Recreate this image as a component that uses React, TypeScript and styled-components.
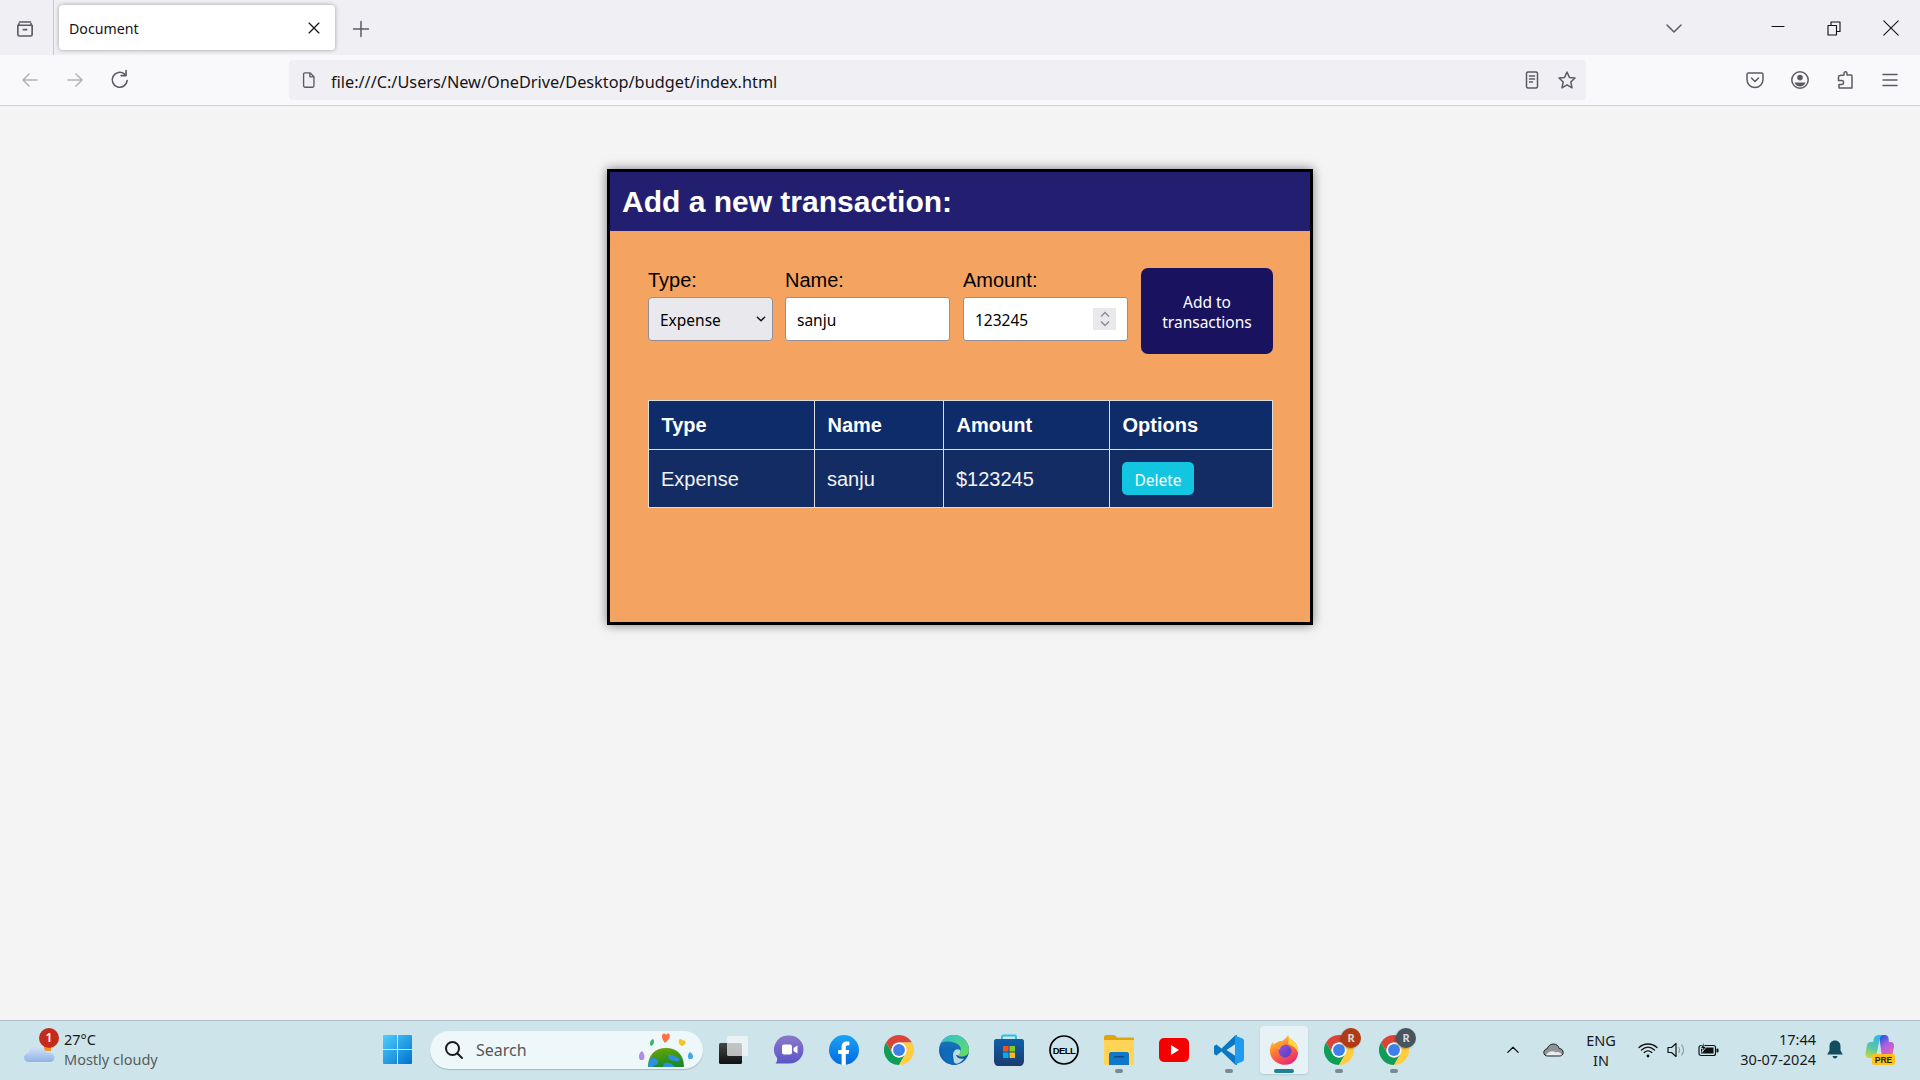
import React from "react";
import styled, { createGlobalStyle } from "styled-components";

const Global = createGlobalStyle`
  html, body { margin: 0; padding: 0; width: 1920px; height: 1080px; overflow: hidden; }
  body { font-family: "Liberation Sans", Arial, sans-serif; background: #f4f4f4; }
  * { box-sizing: border-box; }
`;

const uiFont = `"Noto Sans", "Open Sans", sans-serif`;

const Screen = styled.div`
  width: 1920px;
  height: 1080px;
  display: flex;
  flex-direction: column;
`;

/* browser chrome */
const TabBar = styled.div`
  height: 55px;
  display: flex;
  background: #f0f0f4;
`;
const ListCell = styled.div`
  width: 54px;
  padding-right: 4px;
  border-right: 1px solid #c9c9d0;
  display: flex;
  align-items: center;
  justify-content: center;
`;
const Tab = styled.div`
  width: 276px;
  height: 45px;
  margin: 5px 0 0 5px;
  padding: 0 12px 0 10px;
  display: flex;
  align-items: center;
  justify-content: space-between;
  background: #fff;
  border-radius: 4px;
  box-shadow: 0 0 4px rgba(0, 0, 0, 0.35);
`;
const TabTitle = styled.span`
  padding-top: 2px;
  font: 14.2px ${uiFont};
  color: #15141a;
`;
const PlusCell = styled.div`
  width: 52px;
  display: flex;
  align-items: center;
  justify-content: center;
  padding-top: 2px;
`;
const Spacer = styled.div`
  flex: 1;
`;
const WinCell = styled.div<{ $w: number }>`
  width: ${(p) => p.$w}px;
  display: flex;
  align-items: center;
  justify-content: center;
`;
const NavBar = styled.div`
  height: 51px;
  display: flex;
  align-items: flex-start;
  padding: 5px 8px 0 7px;
  background: #f9f9fb;
  border-bottom: 1px solid #cfcfd8;
`;
const NavCell = styled.div`
  width: 45px;
  height: 40px;
  display: flex;
  align-items: center;
  justify-content: center;
`;
const UrlBar = styled.div`
  width: 1297px;
  height: 40px;
  margin-left: 147px;
  padding: 0 2px 0 11px;
  display: flex;
  align-items: center;
  background: #f0f0f4;
  border-radius: 4px;
`;
const UrlText = styled.span`
  flex: 1;
  margin-left: 13px;
  padding-top: 3px;
  font: 16.3px ${uiFont};
  color: #15141a;
`;
const UrlAction = styled.div`
  width: 35px;
  display: flex;
  justify-content: center;
`;
const NavRight = styled.div`
  margin-left: auto;
  display: flex;
`;

/* page */
const Page = styled.main`
  flex: 1;
  display: flex;
  justify-content: center;
  align-items: flex-start;
  padding-top: 63px;
  background: #f4f4f4;
`;
const Card = styled.section`
  width: 706px;
  height: 456px;
  border: 3px solid #000;
  background: #f4a460;
  box-shadow: 0 0 10px rgba(0, 0, 0, 0.5);
`;
const CardHeader = styled.header`
  height: 59px;
  padding-left: 12px;
  display: flex;
  align-items: center;
  background: #231f70;
`;
const CardTitle = styled.h2`
  margin: 0;
  font-size: 30px;
  font-weight: 700;
  color: #fff;
`;
const CardBody = styled.div`
  padding: 37px 38px 0;
`;
const FormRow = styled.form`
  display: flex;
  align-items: flex-start;
`;
const Field = styled.div<{ $w: number; $gap: number }>`
  flex: none;
  width: ${(p) => p.$w}px;
  margin-right: ${(p) => p.$gap}px;
  display: flex;
  flex-direction: column;
  position: relative;
`;
const Label = styled.label`
  height: 29px;
  padding-top: 1px;
  font-size: 20px;
  color: #000;
`;
const ControlWrap = styled.div`
  position: relative;
`;
const Select = styled.select`
  width: 100%;
  height: 44px;
  padding: 2px 0 0 11px;
  appearance: none;
  font: 15.5px ${uiFont};
  color: #000;
  background: #e9e9ed;
  border: 1px solid #8f8f9d;
  border-radius: 4px;
`;
const Input = styled.input`
  width: 100%;
  height: 44px;
  padding: 2px 11px 0;
  font: 15.5px ${uiFont};
  color: #000;
  background: #fff;
  border: 1px solid #8f8f9d;
  border-radius: 3px;
`;
const SelectArrow = styled.span`
  position: absolute;
  right: 6px;
  top: 16px;
  display: flex;
`;
const Spin = styled.span`
  position: absolute;
  right: 12px;
  top: 11px;
  width: 23px;
  height: 22px;
  display: flex;
  align-items: center;
  justify-content: center;
  background: #e9e9ed;
`;
const AddButton = styled.button`
  flex: none;
  width: 132px;
  height: 86px;
  padding: 1px 12px 0;
  font: 15.5px/20px ${uiFont};
  color: #fff;
  background: #19125f;
  border: none;
  border-radius: 7px;
`;
const Table = styled.table`
  width: 624px;
  margin-top: 46px;
  border-collapse: collapse;
  table-layout: fixed;
`;
const Th = styled.th<{ $w: number }>`
  width: ${(p) => p.$w}px;
  padding: 12.5px 12.5px;
  font-size: 20px;
  font-weight: 700;
  text-align: left;
  color: #fff;
  background: #0e2c6a;
  border: 1px solid #ddd;
`;
const Td = styled.td`
  padding: 13px 12px 11px;
  font-size: 20px;
  color: #f2f2f2;
  background: #142c64;
  border: 1px solid #ddd;
`;
const DeleteButton = styled.button`
  width: 72px;
  height: 33px;
  margin-top: -1px;
  margin-bottom: 1px;
  padding: 2px 0 0;
  display: block;
  font: 15.5px ${uiFont};
  color: #fff;
  background: #12c5e0;
  border: none;
  border-radius: 5px;
`;

/* windows taskbar */
const Taskbar = styled.footer`
  height: 60px;
  padding-bottom: 2px;
  display: flex;
  align-items: center;
  background: #cde5ea;
  border-top: 1px solid #aebfca;
  font-family: ${uiFont};
`;
const Weather = styled.div`
  width: 370px;
  padding-left: 24px;
  display: flex;
  align-items: center;
  gap: 9px;
`;
const WeatherIcon = styled.div`
  position: relative;
  width: 31px;
  height: 27px;
  display: flex;
  align-items: flex-end;
`;
const Badge = styled.span`
  position: absolute;
  left: 15px;
  top: -8px;
  width: 20px;
  height: 20px;
  border-radius: 50%;
  background: #c42b1c;
  color: #fff;
  font-size: 12px;
  font-weight: 600;
  line-height: 20px;
  text-align: center;
`;
const TwoLines = styled.div<{ $align?: string; $drop?: number }>`
  display: flex;
  flex-direction: column;
  gap: 1px;
  padding-top: ${(p) => p.$drop || 0}px;
  width: ${(p) => (p.$align === "right" ? "100%" : "auto")};
  text-align: ${(p) => p.$align || "left"};
  font-size: 14.5px;
  line-height: 19px;
  white-space: nowrap;
  color: #1a1a1a;
`;
const Muted = styled.span`
  color: #555c60;
`;
const AppCell = styled.div<{ $active?: boolean; $running?: boolean }>`
  position: relative;
  width: 55px;
  height: 48px;
  display: flex;
  align-items: center;
  justify-content: center;
  border-radius: 4px;
  ${(p) => p.$active && `
    background: #e6f2f6;
    box-shadow: 0 1px 2px rgba(0,0,0,.12);
    width: 48px;
    margin: 0 3.5px;
  `}
  ${(p) => (p.$running || p.$active) && `
    &::after {
      content: "";
      position: absolute;
      bottom: 1px;
      left: 50%;
      transform: translateX(-50%);
      width: ${p.$active ? 20 : 8}px;
      height: 4px;
      border-radius: 2px;
      background: ${p.$active ? "#218192" : "#7b8a90"};
    }
  `}
`;
const SearchBox = styled.div`
  width: 273px;
  height: 38px;
  margin: 0 3px 0 5px;
  padding: 0 8px 0 14px;
  display: flex;
  align-items: center;
  background: #eef7fa;
  border-radius: 19px;
  box-shadow: 0 1px 1px rgba(0, 0, 0, 0.2);
`;
const SearchText = styled.span`
  flex: 1;
  margin-left: 12px;
  font-size: 16px;
  color: #555;
`;
const AppGroup = styled.div`
  display: flex;
  align-items: center;
`;
const Tray = styled.div`
  margin-left: auto;
  padding-right: 14px;
  display: flex;
  align-items: center;
`;
const TrayCell = styled.div<{ $w: number }>`
  width: ${(p) => p.$w}px;
  display: flex;
  align-items: center;
  justify-content: center;
`;
const ProfileBubble = styled.span<{ $bg: string }>`
  position: absolute;
  right: 5px;
  top: 2px;
  width: 20px;
  height: 20px;
  border-radius: 50%;
  background: ${(p) => p.$bg};
  box-shadow: -1px 1px 2px rgba(0, 0, 0, 0.3);
  color: #d8d8d8;
  font-size: 11px;
  font-weight: 700;
  line-height: 20px;
  text-align: center;
`;

const stroke = "#5b5b66";

function Line({ d, size = 20, color = stroke, sw = 1.5 }: { d: string; size?: number; color?: string; sw?: number }) {
  return (
    <svg width={size} height={size} viewBox="0 0 20 20" fill="none" stroke={color} strokeWidth={sw} strokeLinecap="round" strokeLinejoin="round">
      <path d={d} />
    </svg>
  );
}

function Chrome({ size = 30 }: { size?: number }) {
  return (
    <svg width={size} height={size} viewBox="0 0 48 48">
      <path fill="#db4437" d="M24 0A24 24 0 0 0 3.2 12L13.6 30A12 12 0 0 1 24 12H44.8A24 24 0 0 0 24 0Z" />
      <path fill="#0f9d58" d="M3.2 12A24 24 0 0 0 24 48L34.4 30A12 12 0 0 1 13.6 30Z" />
      <path fill="#ffcd40" d="M44.8 12H24A12 12 0 0 1 34.4 30L24 48A24 24 0 0 0 44.8 12Z" />
      <circle cx="24" cy="24" r="12" fill="#fff" />
      <circle cx="24" cy="24" r="9.5" fill="#3f7fe8" />
    </svg>
  );
}

function Teams() {
  return (
    <svg width="30" height="30" viewBox="0 0 30 30">
      <defs>
        <linearGradient id="teamsG" x1="0" y1="0" x2="0" y2="1">
          <stop offset="0" stopColor="#8a78c9" />
          <stop offset="1" stopColor="#5a55c8" />
        </linearGradient>
      </defs>
      <path fill="url(#teamsG)" d="M15.5 0.5A14 14 0 1 1 15.5 28.5H1.5C3 27 3.5 25 3 23A14 14 0 0 1 15.5 0.5Z" />
      <rect x="8" y="9.5" width="10" height="10" rx="2" fill="#fff" />
      <path fill="#fff" d="M19.5 13L23.5 10.5V18.5L19.5 16Z" />
    </svg>
  );
}

function Facebook() {
  return (
    <svg width="30" height="30" viewBox="0 0 30 30">
      <defs>
        <linearGradient id="fbG" x1="0" y1="0" x2="0" y2="1">
          <stop offset="0" stopColor="#19a3f5" />
          <stop offset="1" stopColor="#0668e1" />
        </linearGradient>
      </defs>
      <circle cx="15" cy="15" r="15" fill="url(#fbG)" />
      <path fill="#fff" d="M12.6 30V19H9.2V15H12.6V12C12.6 8.5 14.6 6.6 17.8 6.6C19 6.6 20.4 6.8 20.4 6.8V10.2H18.8C17.2 10.2 16.8 11.2 16.8 12.2V15H20.2L19.6 19H16.8V30Z" />
    </svg>
  );
}

function Edge() {
  return (
    <svg width="30" height="30" viewBox="0 0 30 30">
      <defs>
        <linearGradient id="edgeA" x1="0" y1="0" x2="1" y2="1">
          <stop offset="0" stopColor="#2cc3cf" />
          <stop offset="1" stopColor="#6bdc5a" />
        </linearGradient>
        <linearGradient id="edgeB" x1="0" y1="0" x2="0" y2="1">
          <stop offset="0" stopColor="#1a7fc8" />
          <stop offset="1" stopColor="#0c4f9c" />
        </linearGradient>
      </defs>
      <circle cx="15" cy="15" r="15" fill="url(#edgeB)" />
      <path fill="url(#edgeA)" d="M2 8C5 2.5 10 0 15 0C24 0 30 7 30 15C30 20 26 21.5 22.5 21.5C19 21.5 17 19.5 17 17.5C21 18 22.5 15 21.5 12.5C19.5 7.5 9 4.5 2 8Z" />
      <path fill="#cde5ea" d="M14 19.5C14 15.5 18 13 21 15C22 18 19.5 20.5 17 20C17.5 22.5 21 24.5 25 23.5C22 28 17 30 14 28C15.5 25.5 14 23 14 19.5Z" opacity="0.9" />
      <path fill="#0d6bb8" d="M14 19C12.5 24 15 28.5 19 30C10 31 3 25 3 18C6 13 13 12 16.5 14.5C15 15.5 14.2 17 14 19Z" />
    </svg>
  );
}

function Store() {
  return (
    <svg width="30" height="32" viewBox="0 0 30 32">
      <defs>
        <linearGradient id="storeG" x1="0" y1="0" x2="0" y2="1">
          <stop offset="0" stopColor="#0f60a8" />
          <stop offset="1" stopColor="#1c3a70" />
        </linearGradient>
      </defs>
      <path fill="none" stroke="#2cc0ee" strokeWidth="2" d="M8 8V3C8 2 8.5 1.5 9.5 1.5H20.5C21.5 1.5 22 2 22 3V8" />
      <path fill="url(#storeG)" d="M2 5H28C29 5 30 6 30 7V27C30 30 28 32 26 32H4C2 32 0 30 0 27V7C0 6 1 5 2 5Z" />
      <rect x="9" y="12" width="5.5" height="5.5" fill="#f1511b" />
      <rect x="15.5" y="12" width="5.5" height="5.5" fill="#80cc28" />
      <rect x="9" y="18.5" width="5.5" height="5.5" fill="#00adef" />
      <rect x="15.5" y="18.5" width="5.5" height="5.5" fill="#fbbc09" />
    </svg>
  );
}

function Dell() {
  return (
    <svg width="30" height="30" viewBox="0 0 30 30">
      <circle cx="15" cy="15" r="14" fill="none" stroke="#000" strokeWidth="1.7" />
      <text x="15" y="18.5" textAnchor="middle" fontFamily="Liberation Sans" fontSize="9.5" fontWeight="700" letterSpacing="-0.6" fill="#000">DELL</text>
    </svg>
  );
}

function Folder() {
  return (
    <svg width="30" height="30" viewBox="0 0 30 30">
      <path fill="#e0a50d" d="M0 2C0 1 1 0 2 0H10C11 0 12 1 13 2.5H29C29.6 2.5 30 3 30 3.5V8H0Z" />
      <path fill="#ffd457" d="M0 5H29C29.6 5 30 5.4 30 6V28C30 29 29 30 28 30H2C1 30 0 29 0 28Z" />
      <path fill="#0f78c8" d="M5 19C5 18 6 17 7 17H23C24 17 25 18 25 19V30H5Z" />
      <rect x="10" y="21" width="10" height="1.5" fill="#0a4a86" />
    </svg>
  );
}

function Youtube() {
  return (
    <svg width="30" height="24" viewBox="0 0 30 24">
      <rect width="30" height="24" rx="5" fill="#f40000" />
      <path fill="#fff" d="M12 7L20 12L12 17Z" />
    </svg>
  );
}

function VsCode() {
  return (
    <svg width="30" height="30" viewBox="0 0 30 30">
      <path fill="#0a78c4" d="M21 0.5L7.5 13.5L2.5 9.5L0 11V19L2.5 20.5L7.5 16.5L21 29.5L23 30V22L12.5 15L23 8V0Z" />
      <path fill="#1f9cf0" d="M21 0.5L28.5 3.5C29.5 4 30 5 30 6V24C30 25 29.5 26 28.5 26.5L21 29.5Z" />
    </svg>
  );
}

function Firefox() {
  return (
    <svg width="30" height="30" viewBox="0 0 30 30">
      <defs>
        <linearGradient id="ffA" x1="0.2" y1="0" x2="0.7" y2="1">
          <stop offset="0" stopColor="#ffd83a" />
          <stop offset="0.45" stopColor="#ff7a30" />
          <stop offset="1" stopColor="#e8247a" />
        </linearGradient>
        <linearGradient id="ffB" x1="0" y1="0" x2="1" y2="1">
          <stop offset="0" stopColor="#a44fd0" />
          <stop offset="1" stopColor="#4a3fc8" />
        </linearGradient>
      </defs>
      <path fill="url(#ffA)" d="M19 0C20 4 24 5 27 9C30 14 30 20 26.5 25C23 29.5 17 31 11 29C5 27 1 22 1 16C1 12 2 9 4 7C4 9 5 10 6 10.5C7 7 10 5.5 13 6C16 4 18 2 19 0Z" />
      <path fill="#ffd83a" d="M19 0C20 4 24 5 27 9C29 12 29.5 15 29 18C27 12 22 10 19 9C20 6 19.5 3 19 0Z" />
      <circle cx="16" cy="16" r="6.5" fill="url(#ffB)" />
      <path fill="#ff9a2b" d="M5 9C9 6.5 14 8 16.5 10C13 10 11 12 11 14.5C8 14 5 12 5 9Z" />
    </svg>
  );
}

function WindowsLogo() {
  return (
    <svg width="29" height="29" viewBox="0 0 29 29">
      <defs>
        <linearGradient id="winG" x1="0" y1="0" x2="1" y2="1">
          <stop offset="0" stopColor="#4fd0fa" />
          <stop offset="1" stopColor="#0070d0" />
        </linearGradient>
      </defs>
      <path fill="url(#winG)" d="M1 0H14V14H0V1C0 0.5 0.5 0 1 0ZM15 0H28C28.5 0 29 0.5 29 1V14H15ZM0 15H14V29H1C0.5 29 0 28.5 0 28ZM15 15H29V28C29 28.5 28.5 29 28 29H15Z" />
    </svg>
  );
}

function TaskView() {
  return (
    <svg width="30" height="30" viewBox="0 0 30 30">
      <defs>
        <linearGradient id="tvG" x1="0" y1="0" x2="0" y2="1">
          <stop offset="0" stopColor="#454545" />
          <stop offset="1" stopColor="#111" />
        </linearGradient>
      </defs>
      <rect x="0" y="8" width="23" height="21" rx="1.5" fill="url(#tvG)" />
      <rect x="8" y="1" width="21" height="20" rx="1.5" fill="#f4f7f8" opacity="0.72" />
    </svg>
  );
}

function EarthDoodle() {
  return (
    <svg width="58" height="34" viewBox="0 0 58 34">
      <defs>
        <linearGradient id="earthG" x1="0" y1="0" x2="0.3" y2="1">
          <stop offset="0" stopColor="#6ea800" />
          <stop offset="1" stopColor="#1b8a2a" />
        </linearGradient>
      </defs>
      <path fill="url(#earthG)" d="M11 34C11 22 18 15 29 15C40 15 47 22 47 34Z" />
      <path fill="#2c8fe0" d="M11 34C11.5 29 13 26 16 24C19 26 22 27 21 30C20 32 17 32 16 34ZM31 22C35 21 40 23 43 27C41 29 37 28 34 27C32 26 31 24 31 22ZM28 30C31 29 35 30 38 34H26C26 32 27 31 28 30Z" />
      <path fill="#ff7043" d="M29 12C26 8 25 5 27 3C28.5 2 29.5 3 30 4C30.5 3 32 2 33 3C35 5 33 9 29 12Z" transform="translate(-1 -2)" />
      <path fill="#3cb371" d="M14 13C12 11 13 7 16 6C18 8 17 12 14 13Z" />
      <path fill="#f7c325" d="M45 13C41 11 41 7 43 6C45 6 45 7 45.5 7.5C47 7 49 8 48.5 10C48 12 46 13 45 13Z" />
      <path fill="#b388e8" d="M3 27C1 24 2 20 5 18C8 21 8 25 6 27Z" />
      <path fill="#3fa9e8" d="M52 26C50 24 51 21 53 19C56 21 57 24 55 26Z" />
    </svg>
  );
}

function CloudSun() {
  return (
    <svg width="31" height="20" viewBox="0 0 31 20">
      <defs>
        <linearGradient id="cloudG" x1="0" y1="0" x2="0" y2="1">
          <stop offset="0" stopColor="#d4e4f7" />
          <stop offset="1" stopColor="#8fb4e6" />
        </linearGradient>
      </defs>
      <path fill="#f9902a" d="M20 0H27V8H20Z" />
      <path fill="url(#cloudG)" d="M5 19C2 19 0 17 0 14.5C0 12 2 10.2 4.5 10C5.5 5 9.5 2.5 14 3C18 3.5 21 6 22 9.5C27 9 30.5 11 30.5 14.5C30.5 17 28.5 19 26 19Z" />
    </svg>
  );
}

function Copilot() {
  return (
    <svg width="30" height="30" viewBox="0 0 30 30">
      <defs>
        <linearGradient id="copA" x1="0.6" y1="0" x2="0.3" y2="1">
          <stop offset="0" stopColor="#2fb6f0" />
          <stop offset="0.6" stopColor="#5cc8a0" />
          <stop offset="1" stopColor="#c8d840" />
        </linearGradient>
        <linearGradient id="copB" x1="0.2" y1="0" x2="0.8" y2="1">
          <stop offset="0" stopColor="#1a58e0" />
          <stop offset="0.45" stopColor="#b060e0" />
          <stop offset="1" stopColor="#f060b0" />
        </linearGradient>
      </defs>
      <path fill="url(#copB)" d="M14 0H20C22 0 23 1 23.5 3L24 7H26C28 7 29.5 9 29 12L27.5 19C27 21 25.5 22 23.5 22H17Z" />
      <path fill="url(#copA)" d="M9 3C10 1 11.5 0 14 0H19C16.5 0 15.5 1.5 15 3L11.5 19C11 21.5 9.5 23 7 23H4C1.5 23 0 21 0.5 18.5L2 10C2.5 8 4 7 6 7H8Z" />
      <rect x="7" y="19" width="23" height="11" rx="2" fill="#ffc21a" />
      <text x="18.5" y="27.5" textAnchor="middle" fontFamily="Liberation Sans" fontSize="8.5" fontWeight="700" fill="#222">PRE</text>
    </svg>
  );
}

export default function App() {
  return (
    <Screen>
      <Global />
      <TabBar>
        <ListCell>
          <Line size={22} d="M3.5 7.5H16.5V16C16.5 16.8 16 17.3 15 17.3H5C4 17.3 3.5 16.8 3.5 16ZM5 4.5H15M4.5 7V6M15.5 7V6M8.5 11.5H11.5" />
        </ListCell>
        <Tab>
          <TabTitle>Document</TabTitle>
          <Line size={18} color="#15141a" sw={1.4} d="M4.5 4.5L15.5 15.5M15.5 4.5L4.5 15.5" />
        </Tab>
        <PlusCell>
          <Line size={20} d="M10 2.5V17.5M2.5 10H17.5" />
        </PlusCell>
        <Spacer />
        <WinCell $w={48}>
          <Line size={20} d="M3 7L10 14L17 7" />
        </WinCell>
        <WinCell $w={52} />
        <WinCell $w={56}>
          <Line size={20} color="#111" sw={1.1} d="M4 8.5H16" />
        </WinCell>
        <WinCell $w={56}>
          <Line size={20} color="#111" sw={1.1} d="M4 7.5H12.5V17H4ZM7 7.5V4H16V13.5H12.5" />
        </WinCell>
        <WinCell $w={58}>
          <Line size={18} color="#111" sw={1.2} d="M2 2L18 18M18 2L2 18" />
        </WinCell>
      </TabBar>
      <NavBar>
        <NavCell>
          <Line color="#b1b1b8" d="M17 10H3M9 4L3 10L9 16" />
        </NavCell>
        <NavCell>
          <Line color="#b1b1b8" d="M3 10H17M11 4L17 10L11 16" />
        </NavCell>
        <NavCell>
          <Line size={22} d="M16.5 10.5A6.8 6.8 0 1 1 14 4.5M15.5 1.5V6H11" />
        </NavCell>
        <UrlBar>
          <Line size={18} d="M4 3.5C4 2.7 4.5 2 5.5 2H11L15.5 6.5V16.5C15.5 17.3 15 18 14 18H5.5C4.5 18 4 17.3 4 16.5ZM11 2V6.5H15.5" />
          <UrlText>file:///C:/Users/New/OneDrive/Desktop/budget/index.html</UrlText>
          <UrlAction>
            <Line d="M4.5 3.5C4.5 2.6 5 2 6 2H14C15 2 15.5 2.6 15.5 3.5V16.5C15.5 17.4 15 18 14 18H6C5 18 4.5 17.4 4.5 16.5ZM7.5 6H12.5M7.5 9H12.5M7.5 12H10.5" />
          </UrlAction>
          <UrlAction>
            <Line d="M10 2L12.4 7.4L18 8L13.8 12L15 17.8L10 14.8L5 17.8L6.2 12L2 8L7.6 7.4Z" />
          </UrlAction>
        </UrlBar>
        <NavRight>
          <NavCell>
            <Line d="M3.5 3H16.5C17.3 3 18 3.6 18 4.4V9.5A8 8 0 0 1 2 9.5V4.4C2 3.6 2.7 3 3.5 3ZM6.5 8L10 11.5L13.5 8" />
          </NavCell>
          <NavCell>
            <svg width="20" height="20" viewBox="0 0 20 20">
              <circle cx="10" cy="10" r="8.2" fill="none" stroke={stroke} strokeWidth="1.5" />
              <circle cx="10" cy="7.6" r="2.8" fill={stroke} />
              <path fill={stroke} d="M4.5 12.5H15.5C14.5 15 12.5 16.5 10 16.5C7.5 16.5 5.5 15 4.5 12.5Z" />
            </svg>
          </NavCell>
          <NavCell>
            <Line d="M9 5V3.5C9 2.5 9.6 1.8 10.5 1.8C11.4 1.8 12 2.5 12 3.5V5H16C16.6 5 17 5.4 17 6V18H4V14.5H7C8 14.5 8.5 13.5 8.5 12.5C8.5 11.5 8 10.5 7 10.5H3.5V7C3.5 6 4 5.5 5 5.5Z" />
          </NavCell>
          <NavCell>
            <Line d="M3 4.5H17M3 10H17M3 15.5H17" />
          </NavCell>
        </NavRight>
      </NavBar>

      <Page>
        <Card>
          <CardHeader>
            <CardTitle>Add a new transaction:</CardTitle>
          </CardHeader>
          <CardBody>
            <FormRow>
              <Field $w={125} $gap={12}>
                <Label>Type:</Label>
                <ControlWrap>
                  <Select defaultValue="expense">
                    <option value="expense">Expense</option>
                    <option value="income">Income</option>
                  </Select>
                  <SelectArrow>
                    <Line size={12} color="#111" sw={2.4} d="M4 7L10 13L16 7" />
                  </SelectArrow>
                </ControlWrap>
              </Field>
              <Field $w={165} $gap={13}>
                <Label>Name:</Label>
                <Input readOnly value="sanju" />
              </Field>
              <Field $w={165} $gap={13}>
                <Label>Amount:</Label>
                <ControlWrap>
                  <Input readOnly value="123245" />
                  <Spin>
                    <svg width="12" height="18" viewBox="0 0 12 18" fill="none" stroke="#8a8a92" strokeWidth="1.4">
                      <path d="M2 6.5L6 2.5L10 6.5M2 11.5L6 15.5L10 11.5" />
                    </svg>
                  </Spin>
                </ControlWrap>
              </Field>
              <AddButton type="button">Add to transactions</AddButton>
            </FormRow>
            <Table>
              <thead>
                <tr>
                  <Th $w={166}>Type</Th>
                  <Th $w={129}>Name</Th>
                  <Th $w={166}>Amount</Th>
                  <Th $w={163}>Options</Th>
                </tr>
              </thead>
              <tbody>
                <tr>
                  <Td>Expense</Td>
                  <Td>sanju</Td>
                  <Td>$123245</Td>
                  <Td>
                    <DeleteButton type="button">Delete</DeleteButton>
                  </Td>
                </tr>
              </tbody>
            </Table>
          </CardBody>
        </Card>
      </Page>

      <Taskbar>
        <Weather>
          <WeatherIcon>
            <CloudSun />
            <Badge>1</Badge>
          </WeatherIcon>
          <TwoLines>
            <span>27°C</span>
            <Muted>Mostly cloudy</Muted>
          </TwoLines>
        </Weather>
        <AppCell>
          <WindowsLogo />
        </AppCell>
        <SearchBox>
          <svg width="20" height="20" viewBox="0 0 20 20" fill="none" stroke="#1a1a1a" strokeWidth="2" strokeLinecap="round">
            <circle cx="8.5" cy="8.5" r="6.5" />
            <path d="M13.5 13.5L18 18" />
          </svg>
          <SearchText>Search</SearchText>
          <EarthDoodle />
        </SearchBox>
        <AppGroup>
          <AppCell><TaskView /></AppCell>
          <AppCell><Teams /></AppCell>
          <AppCell><Facebook /></AppCell>
          <AppCell><Chrome /></AppCell>
          <AppCell><Edge /></AppCell>
          <AppCell><Store /></AppCell>
          <AppCell><Dell /></AppCell>
          <AppCell $running><Folder /></AppCell>
          <AppCell><Youtube /></AppCell>
          <AppCell $running><VsCode /></AppCell>
          <AppCell $active><Firefox /></AppCell>
          <AppCell $running>
            <Chrome />
            <ProfileBubble $bg="#b23a12">R</ProfileBubble>
          </AppCell>
          <AppCell $running>
            <Chrome />
            <ProfileBubble $bg="#47555f">R</ProfileBubble>
          </AppCell>
        </AppGroup>
        <Tray>
          <TrayCell $w={40}>
            <Line size={16} color="#111" sw={1.6} d="M3.5 13L10 6.5L16.5 13" />
          </TrayCell>
          <TrayCell $w={40}>
            <svg width="21" height="14" viewBox="0 0 21 14">
              <path fill="#8d9599" stroke="#222" strokeWidth="1" d="M4.5 13C2.2 13 .8 11.5 .8 9.5C.8 7.5 2.2 6 4.2 5.8C5 3 7.5 1 10.5 1C13.5 1 15.5 3 16.2 5.5C18.5 5.6 20.2 7.2 20.2 9.5C20.2 11.5 18.8 13 16.5 13Z" />
              <path fill="#e8eeef" d="M3 12.2C5 9 9 7 13 9.5C15 8.5 17.5 9.5 19 12.2Z" />
            </svg>
          </TrayCell>
          <TrayCell $w={56}>
            <TwoLines $align="center" $drop={2}>
              <span>ENG</span>
              <span>IN</span>
            </TwoLines>
          </TrayCell>
          <TrayCell $w={38}>
            <svg width="20" height="16" viewBox="0 0 20 16" fill="none" stroke="#111" strokeWidth="1.3" strokeLinecap="round">
              <path d="M1 5.5C6 .8 14 .8 19 5.5M3.5 8C7.5 4.5 12.5 4.5 16.5 8M6.2 10.5C8.5 8.5 11.5 8.5 13.8 10.5" />
              <circle cx="10" cy="14" r="1.4" fill="#111" stroke="none" />
            </svg>
          </TrayCell>
          <TrayCell $w={20}>
            <svg width="20" height="18" viewBox="0 0 20 18" fill="none" strokeWidth="1.2">
              <path stroke="#111" strokeLinejoin="round" d="M1 6.5H4.5L9 2.5V15.5L4.5 11.5H1Z" />
              <path stroke="#8fa0a6" d="M11.5 6C12.8 7.8 12.8 10.2 11.5 12M14.5 3.5C17 6.8 17 11.2 14.5 14.5" />
            </svg>
          </TrayCell>
          <TrayCell $w={42}>
            <svg width="21" height="15" viewBox="0 0 21 15">
              <rect x="1" y="3.5" width="16.5" height="10" rx="2" fill="none" stroke="#111" strokeWidth="1.2" />
              <rect x="3" y="5.5" width="12.5" height="6" fill="#111" />
              <rect x="18.5" y="6.5" width="2" height="4" rx="1" fill="#111" />
              <path fill="#111" stroke="#cde5ea" strokeWidth=".8" d="M6 0L2.5 6.5H5L4 10.5L8.5 4.5H6Z" />
            </svg>
          </TrayCell>
          <TrayCell $w={87}>
            <TwoLines $align="right">
              <span>17:44</span>
              <span>30-07-2024</span>
            </TwoLines>
          </TrayCell>
          <TrayCell $w={38}>
            <svg width="16" height="20" viewBox="0 0 16 20">
              <path fill="#134b5f" d="M8 0.5C11.5 0.5 13.5 3 13.5 6.5V10.5L15.8 14.5H0.2L2.5 10.5V6.5C2.5 3 4.5 0.5 8 0.5Z" />
              <path fill="#134b5f" d="M5.5 16H10.5C10.2 17.5 9.2 18.5 8 18.5C6.8 18.5 5.8 17.5 5.5 16Z" />
            </svg>
          </TrayCell>
          <TrayCell $w={52}>
            <Copilot />
          </TrayCell>
        </Tray>
      </Taskbar>
    </Screen>
  );
}
